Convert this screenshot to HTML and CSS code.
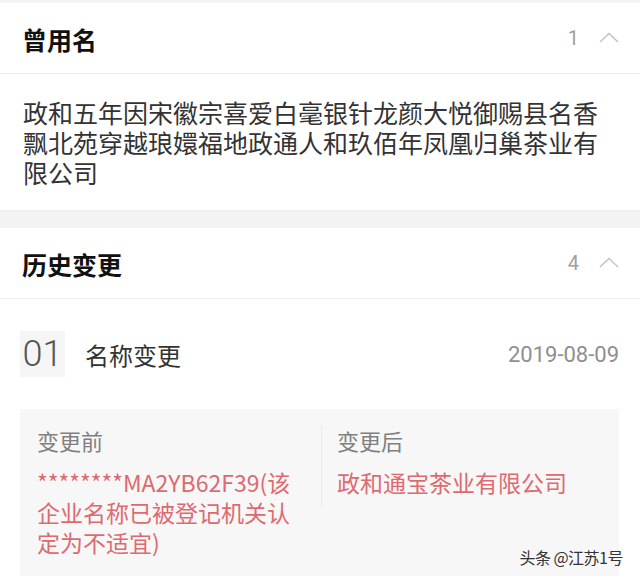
FILE: index.html
```html
<!DOCTYPE html>
<html lang="zh">
<head>
<meta charset="utf-8">
<link rel="stylesheet" href="styles.css">
</head>
<body>
<div class="strip-top"></div>
<section class="card">
  <header class="card-head">
    <h2 class="card-title">曾用名</h2>
    <div class="card-meta"><span class="count">1</span>
      <svg class="chev" width="20" height="11" viewBox="0 0 20 11"><polyline points="1,10 10,1.5 19,10" fill="none" stroke="#c4c4c4" stroke-width="1.6"/></svg>
    </div>
  </header>
  <div class="former">政和五年因宋徽宗喜爱白毫银针龙颜大悦御赐县名香飘北苑穿越琅嬛福地政通人和玖佰年凤凰归巢茶业有限公司</div>
</section>
<div class="band"></div>
<section class="card">
  <header class="card-head">
    <h2 class="card-title">历史变更</h2>
    <div class="card-meta"><span class="count">4</span>
      <svg class="chev" width="20" height="11" viewBox="0 0 20 11"><polyline points="1,10 10,1.5 19,10" fill="none" stroke="#c4c4c4" stroke-width="1.6"/></svg>
    </div>
  </header>
  <div class="change">
    <div class="change-row">
      <span class="idx">01</span>
      <span class="change-name">名称变更</span>
      <span class="change-date">2019-08-09</span>
    </div>
    <div class="diff">
      <div class="diff-col">
        <div class="diff-label">变更前</div>
        <div class="diff-value">********MA2YB62F39(该企业名称已被登记机关认定为不适宜)</div>
      </div>
      <div class="diff-col diff-after">
        <div class="diff-label">变更后</div>
        <div class="diff-value">政和通宝茶业有限公司</div>
      </div>
      <div class="watermark">头条 @江苏1号</div>
    </div>
  </div>
</section>
</body>
</html>
```

FILE: styles.css
```css
* { box-sizing: border-box; }
html, body { margin: 0; padding: 0; background: #fff; }
body {
  font-family: "Noto Sans CJK SC", "Noto Sans", sans-serif;
  color: #333;
  width: 640px;
  overflow: hidden;
}
.strip-top { height: 3px; background: #f3f3f3; }
.band { height: 18px; background: #f3f3f3; border-top: 1px solid #ececec; }
.card { background: #fff; }
.card-head {
  height: 71px;
  display: flex;
  align-items: center;
  justify-content: space-between;
  padding: 0 21px 0 22px;
  border-bottom: 1px solid #eeeeee;
}
.card-title {
  margin: 0;
  font-size: 25px;
  font-weight: 700;
  color: #111;
  line-height: 30px;
  padding-top: 2px;
}
.card-meta { display: flex; align-items: center; gap: 20px; }
.count {
  font-family: Roboto, "Noto Sans", sans-serif;
  font-size: 20px;
  color: #a0a0a0;
  line-height: 24px;
}
.chev { display: block; margin-top: -2px; }
.former {
  padding: 23px 22px 23px 23px;
  font-size: 25px;
  line-height: 30px;
  color: #333;
}
.change { padding: 32px 21px 0 20px; }
.change-row {
  display: flex;
  align-items: center;
  gap: 20px;
}
.idx {
  width: 45px;
  height: 46px;
  background: #f5f5f5;
  display: flex;
  align-items: center;
  justify-content: center;
  font-family: Roboto, sans-serif;
  font-weight: 300;
  font-size: 36px;
  color: #555;
}
.change-name { font-size: 24px; color: #333; flex: 1; }
.change-date {
  font-family: Roboto, sans-serif;
  font-size: 22px;
  color: #8f8f8f;
}
.diff {
  position: relative;
  margin-top: 32px;
  background: #f7f7f7;
  display: grid;
  grid-template-columns: 301px 1fr;
  align-items: start;
  padding: 16px 0 20px 0;
  height: 167px;
}
.diff-col { padding: 0 17px 0 17px; }
.diff-after {
  border-left: 1px solid #ebebeb;
  padding: 0 10px 10px 15px;
}
.diff-label { font-size: 22px; line-height: 30px; color: #808080; }
.diff-value {
  margin-top: 12px;
  font-size: 23px;
  line-height: 30px;
  color: #dd6a70;
  word-break: break-all;
}
.watermark {
  position: absolute;
  right: -4px;
  bottom: 7px;
  font-size: 16px;
  color: #333;
  letter-spacing: -0.5px;
}
```
